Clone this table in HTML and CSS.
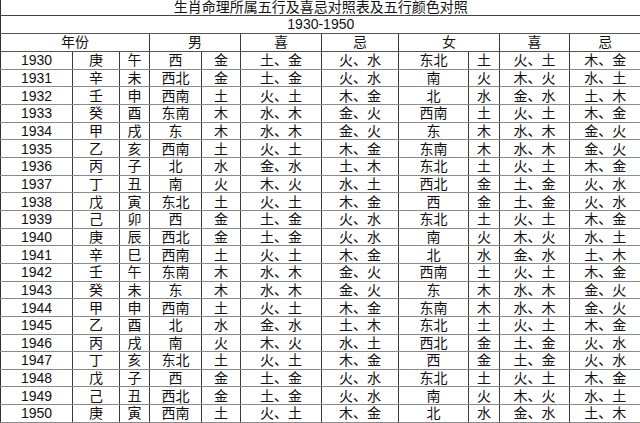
FILE: index.html
```html
<!DOCTYPE html>
<html lang="zh-CN">
<head>
<meta charset="utf-8">
<title>生肖命理所属五行及喜忌对照表</title>
<link rel="stylesheet" href="styles.css">
</head>
<body>
<table class="sheet">
<colgroup>
<col class="c-year"><col class="c-stem"><col class="c-branch"><col class="c-mdir"><col class="c-mel"><col class="c-mxi"><col class="c-mji"><col class="c-fdir"><col class="c-fel"><col class="c-fxi"><col class="c-fji">
</colgroup>
<tbody>
<tr class="r-title"><td colspan="11">生肖命理所属五行及喜忌对照表及五行颜色对照</td></tr>
<tr class="r-sub"><td colspan="11">1930-1950</td></tr>
<tr class="r-head"><td colspan="3">年份</td><td colspan="2">男</td><td>喜</td><td>忌</td><td colspan="2">女</td><td>喜</td><td>忌</td></tr>
<tr><td>1930</td><td>庚</td><td>午</td><td>西</td><td>金</td><td>土、金</td><td>火、水</td><td>东北</td><td>土</td><td>火、土</td><td>木、金</td></tr>
<tr><td>1931</td><td>辛</td><td>未</td><td>西北</td><td>金</td><td>土、金</td><td>火、水</td><td>南</td><td>火</td><td>木、火</td><td>水、土</td></tr>
<tr><td>1932</td><td>壬</td><td>申</td><td>西南</td><td>土</td><td>火、土</td><td>木、金</td><td>北</td><td>水</td><td>金、水</td><td>土、木</td></tr>
<tr><td>1933</td><td>癸</td><td>酉</td><td>东南</td><td>木</td><td>水、木</td><td>金、火</td><td>西南</td><td>土</td><td>火、土</td><td>木、金</td></tr>
<tr><td>1934</td><td>甲</td><td>戌</td><td>东</td><td>木</td><td>水、木</td><td>金、火</td><td>东</td><td>木</td><td>水、木</td><td>金、火</td></tr>
<tr><td>1935</td><td>乙</td><td>亥</td><td>西南</td><td>土</td><td>火、土</td><td>木、金</td><td>东南</td><td>木</td><td>水、木</td><td>金、火</td></tr>
<tr><td>1936</td><td>丙</td><td>子</td><td>北</td><td>水</td><td>金、水</td><td>土、木</td><td>东北</td><td>土</td><td>火、土</td><td>木、金</td></tr>
<tr><td>1937</td><td>丁</td><td>丑</td><td>南</td><td>火</td><td>木、火</td><td>水、土</td><td>西北</td><td>金</td><td>土、金</td><td>火、水</td></tr>
<tr><td>1938</td><td>戊</td><td>寅</td><td>东北</td><td>土</td><td>火、土</td><td>木、金</td><td>西</td><td>金</td><td>土、金</td><td>火、水</td></tr>
<tr><td>1939</td><td>己</td><td>卯</td><td>西</td><td>金</td><td>土、金</td><td>火、水</td><td>东北</td><td>土</td><td>火、土</td><td>木、金</td></tr>
<tr><td>1940</td><td>庚</td><td>辰</td><td>西北</td><td>金</td><td>土、金</td><td>火、水</td><td>南</td><td>火</td><td>木、火</td><td>水、土</td></tr>
<tr><td>1941</td><td>辛</td><td>巳</td><td>西南</td><td>土</td><td>火、土</td><td>木、金</td><td>北</td><td>水</td><td>金、水</td><td>土、木</td></tr>
<tr><td>1942</td><td>壬</td><td>午</td><td>东南</td><td>木</td><td>水、木</td><td>金、火</td><td>西南</td><td>土</td><td>火、土</td><td>木、金</td></tr>
<tr><td>1943</td><td>癸</td><td>未</td><td>东</td><td>木</td><td>水、木</td><td>金、火</td><td>东</td><td>木</td><td>水、木</td><td>金、火</td></tr>
<tr><td>1944</td><td>甲</td><td>申</td><td>西南</td><td>土</td><td>火、土</td><td>木、金</td><td>东南</td><td>木</td><td>水、木</td><td>金、火</td></tr>
<tr><td>1945</td><td>乙</td><td>酉</td><td>北</td><td>水</td><td>金、水</td><td>土、木</td><td>东北</td><td>土</td><td>火、土</td><td>木、金</td></tr>
<tr><td>1946</td><td>丙</td><td>戌</td><td>南</td><td>火</td><td>木、火</td><td>水、土</td><td>西北</td><td>金</td><td>土、金</td><td>火、水</td></tr>
<tr><td>1947</td><td>丁</td><td>亥</td><td>东北</td><td>土</td><td>火、土</td><td>木、金</td><td>西</td><td>金</td><td>土、金</td><td>火、水</td></tr>
<tr><td>1948</td><td>戊</td><td>子</td><td>西</td><td>金</td><td>土、金</td><td>火、水</td><td>东北</td><td>土</td><td>火、土</td><td>木、金</td></tr>
<tr><td>1949</td><td>己</td><td>丑</td><td>西北</td><td>金</td><td>土、金</td><td>火、水</td><td>南</td><td>火</td><td>木、火</td><td>水、土</td></tr>
<tr><td>1950</td><td>庚</td><td>寅</td><td>西南</td><td>土</td><td>火、土</td><td>木、金</td><td>北</td><td>水</td><td>金、水</td><td>土、木</td></tr>
</tbody>
</table>
</body>
</html>
```
FILE: styles.css
```css
html, body {
  margin: 0;
  padding: 0;
  background: #fff;
}
.sheet {
  width: 640px;
  table-layout: fixed;
  border-collapse: collapse;
  font-family: "Liberation Sans", "Noto Sans CJK SC", sans-serif;
  font-size: 14px;
  color: #111;
  border-left: 1px solid #333;
}
.c-year { width: 72px; }
.c-stem { width: 47px; }
.c-branch { width: 30px; }
.c-mdir { width: 52px; }
.c-mel { width: 39px; }
.c-mxi { width: 81px; }
.c-mji { width: 77px; }
.c-fdir { width: 70px; }
.c-fel { width: 31px; }
.c-fxi { width: 70px; }
.c-fji { width: 71px; }
.sheet td {
  padding: 0;
  text-align: center;
  vertical-align: middle;
  line-height: 16px;
  height: 16.67px;
  white-space: nowrap;
  overflow: hidden;
  border-left: 1px solid #3a3a3a;
  border-bottom: 1px solid #8a8a8a;
}
.sheet td:first-child {
  border-left: 1px solid #333;
}
.r-title td {
  height: 15px;
  line-height: 15px;
  border-bottom: 1px solid #444;
}
.r-sub td {
  height: 17px;
  line-height: 17px;
  border-bottom: 1px solid #555;
}
.r-head td {
  height: 17px;
  line-height: 17px;
  border-bottom: 1px solid #555;
}
```
